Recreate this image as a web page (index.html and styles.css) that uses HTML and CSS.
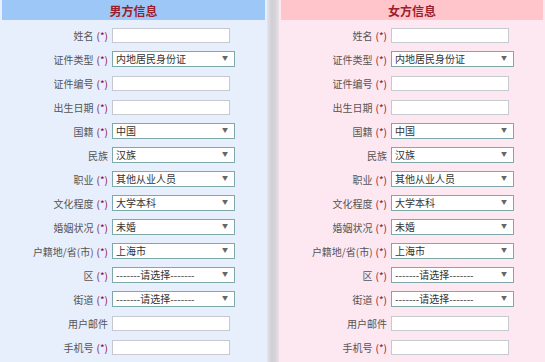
FILE: index.html
```html
<!DOCTYPE html>
<html lang="zh-CN">
<head>
    <meta charset="UTF-8">
    <meta name="viewport" content="width=device-width, initial-scale=1.0">
    <title>婚姻登记信息</title>
    <link rel="stylesheet" href="styles.css">
</head>
<body>
    <div class="page">
        <div class="panel male">
            <h2 class="panel-title">男方信息</h2>
            <div class="row"><label>姓名<span class="req">(*)</span></label><input type="text" class="txt"></div>
            <div class="row"><label>证件类型<span class="req">(*)</span></label><span class="sel"><select><option>内地居民身份证</option></select></span></div>
            <div class="row"><label>证件编号<span class="req">(*)</span></label><input type="text" class="txt"></div>
            <div class="row"><label>出生日期<span class="req">(*)</span></label><input type="text" class="txt"></div>
            <div class="row"><label>国籍<span class="req">(*)</span></label><span class="sel"><select><option>中国</option></select></span></div>
            <div class="row"><label>民族</label><span class="sel"><select><option>汉族</option></select></span></div>
            <div class="row"><label>职业<span class="req">(*)</span></label><span class="sel"><select><option>其他从业人员</option></select></span></div>
            <div class="row"><label>文化程度<span class="req">(*)</span></label><span class="sel"><select><option>大学本科</option></select></span></div>
            <div class="row"><label>婚姻状况<span class="req">(*)</span></label><span class="sel"><select><option>未婚</option></select></span></div>
            <div class="row"><label>户籍地/省(市)<span class="req">(*)</span></label><span class="sel"><select><option>上海市</option></select></span></div>
            <div class="row"><label>区<span class="req">(*)</span></label><span class="sel"><select><option>-------请选择-------</option></select></span></div>
            <div class="row"><label>街道<span class="req">(*)</span></label><span class="sel"><select><option>-------请选择-------</option></select></span></div>
            <div class="row"><label>用户邮件</label><input type="text" class="txt"></div>
            <div class="row"><label>手机号<span class="req">(*)</span></label><input type="text" class="txt"></div>
        </div>

        <div class="divider"></div>

        <div class="panel female">
            <h2 class="panel-title">女方信息</h2>
            <div class="row"><label>姓名<span class="req">(*)</span></label><input type="text" class="txt"></div>
            <div class="row"><label>证件类型<span class="req">(*)</span></label><span class="sel"><select><option>内地居民身份证</option></select></span></div>
            <div class="row"><label>证件编号<span class="req">(*)</span></label><input type="text" class="txt"></div>
            <div class="row"><label>出生日期<span class="req">(*)</span></label><input type="text" class="txt"></div>
            <div class="row"><label>国籍<span class="req">(*)</span></label><span class="sel"><select><option>中国</option></select></span></div>
            <div class="row"><label>民族</label><span class="sel"><select><option>汉族</option></select></span></div>
            <div class="row"><label>职业<span class="req">(*)</span></label><span class="sel"><select><option>其他从业人员</option></select></span></div>
            <div class="row"><label>文化程度<span class="req">(*)</span></label><span class="sel"><select><option>大学本科</option></select></span></div>
            <div class="row"><label>婚姻状况<span class="req">(*)</span></label><span class="sel"><select><option>未婚</option></select></span></div>
            <div class="row"><label>户籍地/省(市)<span class="req">(*)</span></label><span class="sel"><select><option>上海市</option></select></span></div>
            <div class="row"><label>区<span class="req">(*)</span></label><span class="sel"><select><option>-------请选择-------</option></select></span></div>
            <div class="row"><label>街道<span class="req">(*)</span></label><span class="sel"><select><option>-------请选择-------</option></select></span></div>
            <div class="row"><label>用户邮件</label><input type="text" class="txt"></div>
            <div class="row"><label>手机号<span class="req">(*)</span></label><input type="text" class="txt"></div>
        </div>
    </div>
</body>
</html>
```

FILE: styles.css
```css
body {
  margin: 0;
  font-family: "Noto Sans CJK SC", "Liberation Sans", sans-serif;
  font-size: 10px;
  color: #555;
  background-color: #fdf0f5;
}

.page {
  display: flex;
  height: 362px;
  overflow: hidden;
}

.panel {
  padding: 0 2px;
}

.male {
  width: 263px;
  background-color: #e7eefc;
}

.female {
  flex: 1;
  background-color: #fde7f0;
}

.divider {
  width: 12px;
  background: linear-gradient(to right, #e2e4ea, #cfcfd4 40%, #d6d3d8 70%, #ece3e8);
}

.panel-title {
  margin: 0 0 3px;
  height: 20px;
  line-height: 21px;
  font-size: 12px;
  font-weight: bold;
  text-align: center;
  color: #9a1e2c;
}

.male .panel-title {
  background-color: #9dc7f6;
}

.female .panel-title {
  background-color: #ffc5cb;
}

.row {
  display: flex;
  align-items: center;
  gap: 4px;
  height: 24px;
}

.row label {
  width: 106px;
  text-align: right;
  white-space: nowrap;
}

.req {
  margin-left: 3px;
  color: #8c1030;
}

.txt {
  box-sizing: border-box;
  width: 118px;
  height: 15px;
  margin: 0;
  padding: 0 3px;
  border: 1px solid #c6c9cf;
  background-color: #fff;
}

.sel {
  position: relative;
  display: block;
}

.sel select {
  appearance: none;
  box-sizing: border-box;
  width: 123px;
  height: 16px;
  margin: 0;
  padding: 0 3px;
  border: 1px solid #7fa8aa;
  border-radius: 0;
  background-color: #fff;
  font-family: inherit;
  font-size: 10px;
  color: #333;
  line-height: 14px;
}

.sel::after {
  content: "▼";
  position: absolute;
  right: 7px;
  top: 3px;
  font-size: 6px;
  line-height: 8px;
  color: #666;
  pointer-events: none;
}
```
